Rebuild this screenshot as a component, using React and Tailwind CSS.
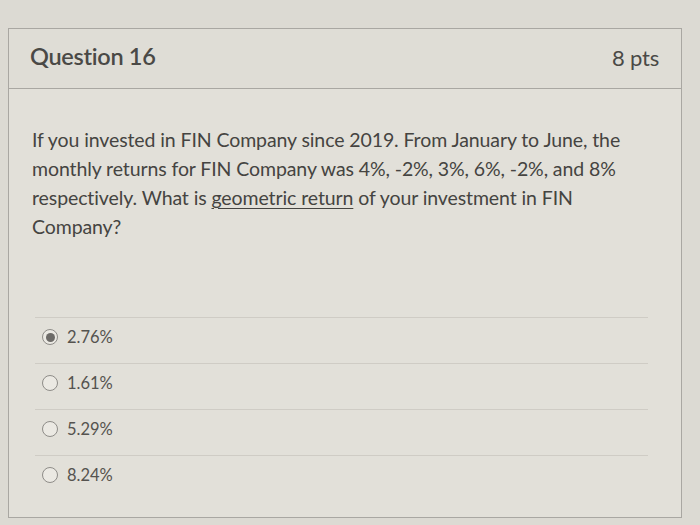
import React from 'react';

const answers = [
    { label: '2.76%', checked: true },
    { label: '1.61%', checked: false },
    { label: '5.29%', checked: false },
    { label: '8.24%', checked: false },
];

function Radio({ checked }) {
    return (
        <span className="flex items-center justify-center w-[16px] h-[16px] rounded-full border-[1.5px] border-[#8e8c88] bg-[#ebe9e3]">
            {checked && <span className="w-[9px] h-[9px] rounded-full bg-[#6d6b68]" />}
        </span>
    );
}

export default function App() {
    return (
        <div
            className="w-[700px] h-[525px] bg-[#dcdad3] pt-[28px] pl-[8px] overflow-hidden"
            style={{ fontFamily: 'Lato, "Open Sans", sans-serif' }}
        >
            <div className="w-[674px] h-[490px] border border-[#a9a7a2] bg-[#e2e0d9] flex flex-col">
                {/* Header */}
                <div className="h-[60px] flex items-center justify-between pl-[21px] pr-[22px] pb-[3px] border-b border-[#a9a7a2] bg-[#dfddd6]">
                    <span className="text-[23.5px] font-semibold text-[#4a4946] tracking-[-0.3px]">Question 16</span>
                    <span className="text-[22px] text-[#4a4946] tracking-[-0.2px]">8 pts</span>
                </div>

                {/* Body */}
                <div className="pt-[36px] pl-[23px]">
                    <p className="w-[600px] text-[19.5px] leading-[29px] text-[#454441] tracking-[-0.1px]">
                        If you invested in FIN Company since 2019. From January to June, the monthly returns for FIN Company was 4%, -2%, 3%, 6%, -2%, and 8% respectively. What is{' '}
                        <span className="underline decoration-1 underline-offset-[3px]">geometric return</span> of your investment in FIN Company?
                    </p>
                </div>

                {/* Answers */}
                <div className="mt-[76px] ml-[26px] mr-[33px] flex flex-col">
                    {answers.map((a) => (
                        <div
                            key={a.label}
                            className="h-[46px] flex items-start gap-[9px] pl-[7px] pt-[9px] border-t border-[#cfccc5]"
                        >
                            <span className="h-[20px] flex items-center">
                                <Radio checked={a.checked} />
                            </span>
                            <span className="text-[16.5px] leading-[20px] text-[#55534f]">{a.label}</span>
                        </div>
                    ))}
                </div>
            </div>
        </div>
    );
}
